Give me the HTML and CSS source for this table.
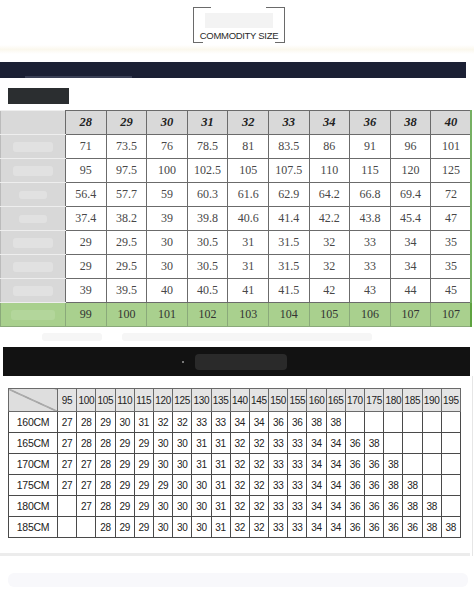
FILE: index.html
```html
<!DOCTYPE html>
<html>
<head>
<meta charset="utf-8">
<link rel="stylesheet" href="styles.css">
</head>
<body>
<div class="page">
  <div class="title-wrap">
    <div class="title">
      <span class="title-blur"></span>
      <span class="title-text">COMMODITY SIZE</span>
    </div>
  </div>
  <div class="cream"></div>
  <div class="navy"><span class="navy-stripe"></span></div>
  <div class="tag"></div>

  <table class="t1">
    <colgroup><col class="c1-first"><col span="10" class="c1"></colgroup>
    <tr class="head"><th class="side"></th><th>28</th><th>29</th><th>30</th><th>31</th><th>32</th><th>33</th><th>34</th><th>36</th><th>38</th><th>40</th></tr>
    <tr><td class="side"><span class="blob"></span></td><td>71</td><td>73.5</td><td>76</td><td>78.5</td><td>81</td><td>83.5</td><td>86</td><td>91</td><td>96</td><td>101</td></tr>
    <tr><td class="side"><span class="blob"></span></td><td>95</td><td>97.5</td><td>100</td><td>102.5</td><td>105</td><td>107.5</td><td>110</td><td>115</td><td>120</td><td>125</td></tr>
    <tr><td class="side"><span class="blob small"></span></td><td>56.4</td><td>57.7</td><td>59</td><td>60.3</td><td>61.6</td><td>62.9</td><td>64.2</td><td>66.8</td><td>69.4</td><td>72</td></tr>
    <tr><td class="side"><span class="blob small"></span></td><td>37.4</td><td>38.2</td><td>39</td><td>39.8</td><td>40.6</td><td>41.4</td><td>42.2</td><td>43.8</td><td>45.4</td><td>47</td></tr>
    <tr><td class="side"><span class="blob"></span></td><td>29</td><td>29.5</td><td>30</td><td>30.5</td><td>31</td><td>31.5</td><td>32</td><td>33</td><td>34</td><td>35</td></tr>
    <tr><td class="side"><span class="blob"></span></td><td>29</td><td>29.5</td><td>30</td><td>30.5</td><td>31</td><td>31.5</td><td>32</td><td>33</td><td>34</td><td>35</td></tr>
    <tr><td class="side"><span class="blob"></span></td><td>39</td><td>39.5</td><td>40</td><td>40.5</td><td>41</td><td>41.5</td><td>42</td><td>43</td><td>44</td><td>45</td></tr>
    <tr class="green"><td class="side-green"><span class="blob green-blob"></span></td><td>99</td><td>100</td><td>101</td><td>102</td><td>103</td><td>104</td><td>105</td><td>106</td><td>107</td><td>107</td></tr>
  </table>

  <div class="fade-row"><span class="fade a"></span><span class="fade b"></span></div>

  <div class="black-bar"><span class="dot"></span><span class="bar-blur"></span></div>

  <div class="lower">
    <table class="t2">
      <colgroup><col class="c2-first"><col span="21" class="c2"></colgroup>
      <tr class="head"><th class="diag"></th><th>95</th><th>100</th><th>105</th><th>110</th><th>115</th><th>120</th><th>125</th><th>130</th><th>135</th><th>140</th><th>145</th><th>150</th><th>155</th><th>160</th><th>165</th><th>170</th><th>175</th><th>180</th><th>185</th><th>190</th><th>195</th></tr>
      <tr><td class="h">160CM</td><td>27</td><td>28</td><td>29</td><td>30</td><td>31</td><td>32</td><td>32</td><td>33</td><td>33</td><td>34</td><td>34</td><td>36</td><td>36</td><td>38</td><td>38</td><td></td><td></td><td></td><td></td><td></td><td></td></tr>
      <tr><td class="h">165CM</td><td>27</td><td>28</td><td>28</td><td>29</td><td>29</td><td>30</td><td>30</td><td>31</td><td>31</td><td>32</td><td>32</td><td>33</td><td>33</td><td>34</td><td>34</td><td>36</td><td>38</td><td></td><td></td><td></td><td></td></tr>
      <tr><td class="h">170CM</td><td>27</td><td>27</td><td>28</td><td>29</td><td>29</td><td>30</td><td>30</td><td>31</td><td>31</td><td>32</td><td>32</td><td>33</td><td>33</td><td>34</td><td>34</td><td>36</td><td>36</td><td>38</td><td></td><td></td><td></td></tr>
      <tr><td class="h">175CM</td><td>27</td><td>27</td><td>28</td><td>29</td><td>29</td><td>29</td><td>30</td><td>30</td><td>31</td><td>32</td><td>32</td><td>33</td><td>33</td><td>34</td><td>34</td><td>36</td><td>36</td><td>38</td><td>38</td><td></td><td></td></tr>
      <tr><td class="h">180CM</td><td></td><td>27</td><td>28</td><td>29</td><td>29</td><td>30</td><td>30</td><td>30</td><td>31</td><td>32</td><td>32</td><td>33</td><td>33</td><td>34</td><td>34</td><td>36</td><td>36</td><td>36</td><td>38</td><td>38</td><td></td></tr>
      <tr><td class="h">185CM</td><td></td><td></td><td>28</td><td>29</td><td>29</td><td>30</td><td>30</td><td>30</td><td>31</td><td>32</td><td>32</td><td>33</td><td>33</td><td>34</td><td>34</td><td>36</td><td>36</td><td>36</td><td>36</td><td>38</td><td>38</td></tr>
    </table>
    <div class="bottom-line"></div>
  </div>
  <div class="bottom-blur"></div>
</div>
</body>
</html>
```

FILE: styles.css
```css
html, body {
  margin: 0;
  padding: 0;
  background: #ffffff;
}
.page {
  width: 474px;
  height: 600px;
  overflow: hidden;
  font-family: "Liberation Sans", Arial, sans-serif;
}
.title-wrap {
  display: flex;
  justify-content: flex-start;
  padding: 7px 0 0 193px;
  height: 43px;
  box-sizing: border-box;
}
.title {
  position: relative;
  width: 92px;
  height: 36px;
  box-sizing: border-box;
  border-left: 1px solid #6a6a6a;
  border-right: 1px solid #6a6a6a;
  display: flex;
  flex-direction: column;
  align-items: center;
  background:
    linear-gradient(#6a6a6a, #6a6a6a) left top / 17px 1px no-repeat,
    linear-gradient(#6a6a6a, #6a6a6a) left bottom / 9px 1px no-repeat,
    linear-gradient(#6a6a6a, #6a6a6a) right top / 18px 1px no-repeat,
    linear-gradient(#6a6a6a, #6a6a6a) right bottom / 9px 1px no-repeat;
}
.title-blur {
  position: absolute;
  top: 6px;
  left: 11px;
  width: 68px;
  height: 15px;
  background: #f3f3f3;
}
.title-text {
  margin-top: 24px;
  font-size: 9.5px;
  letter-spacing: -0.3px;
  color: #2a2a2a;
  line-height: 10px;
  white-space: nowrap;
}
.cream {
  height: 9px;
  margin-top: 2px;
  background: linear-gradient(#ffffff, #fbf8ee 50%, #ffffff);
}
.navy {
  margin-top: 8px;
  width: 466px;
  height: 16px;
  background: #1b2034;
  display: flex;
  align-items: flex-end;
}
.navy-stripe {
  margin-left: 25px;
  width: 107px;
  height: 2px;
  background: #3b4156;
}
.tag {
  margin: 10px 0 0 8px;
  width: 61px;
  height: 16px;
  background: #2b2e30;
}
.t1 {
  margin-top: 6px;
  border-collapse: collapse;
  table-layout: fixed;
  width: 471px;
  font-family: "Liberation Serif", "Times New Roman", serif;
  color: #474747;
}
.c1-first { width: 65px; }
.c1 { width: 40.6px; }
.t1 td, .t1 th {
  border: 1px solid #6b6b6b;
  height: 23px;
  padding: 0;
  text-align: center;
  font-size: 12px;
  font-weight: normal;
}
.t1 .head th {
  background: #d9d9d9;
  font-weight: bold;
  font-style: italic;
  font-size: 12.5px;
  color: #222;
}
.t1 .side {
  background: #d8d8d8;
  border-top-color: #eeeeee;
  border-bottom-color: #eeeeee;
  border-left-color: #bbbbbb;
}
.t1 .head .side { background: #d9d9d9; }
.blob {
  display: inline-block;
  width: 40px;
  height: 10px;
  background: #e1e1e1;
  border-radius: 3px;
  vertical-align: middle;
}
.blob.small { width: 28px; height: 8px; }
.t1 tr.green td {
  background: #a9d08e;
  color: #333;
  border-color: #8aa97a;
}
.t1 tr.green td:last-child { border-right: 2px solid #5fa340; }
.t1 td:last-child, .t1 th:last-child { border-right: 2px solid #76b062; }
.t1 .side-green { background: #a9d08e; }
.green-blob { background: #b3d69b; width: 44px; }
.fade-row {
  height: 20px;
  display: flex;
  align-items: center;
  gap: 20px;
  padding-left: 42px;
}
.fade { height: 8px; background: #f6f6f6; border-radius: 3px; }
.fade.a { width: 60px; }
.fade.b { width: 250px; }
.black-bar {
  margin-left: 3px;
  width: 467px;
  height: 29px;
  background: #121212;
  display: flex;
  align-items: center;
}
.dot {
  margin-left: 179px;
  width: 2px;
  height: 2px;
  background: #777;
}
.bar-blur {
  margin-left: 11px;
  width: 92px;
  height: 16px;
  background: #2a2a2a;
  border-radius: 4px;
}
.lower {
  width: 472px;
  border-right: 1px solid #e6e6e6;
  padding-top: 12px;
}
.t2 {
  margin: 0 0 0 8px;
  border-collapse: collapse;
  table-layout: fixed;
  width: 452px;
  font-family: "Liberation Sans", Arial, sans-serif;
  color: #222;
}
.c2-first { width: 49px; }
.c2 { width: 19.2px; }
.t2 td, .t2 th {
  border: 1px solid #4a4a4a;
  height: 20px;
  padding: 0;
  text-align: center;
  font-size: 10px;
  letter-spacing: -0.3px;
  font-weight: normal;
  white-space: nowrap;
  overflow: hidden;
}
.t2 .head th {
  height: 22px;
  background: #e4e4e4;
  border-color: #6a6a6a;
}
.t2 .head th.diag {
  background-image: linear-gradient(to top right, transparent calc(50% - 0.7px), #555 50%, transparent calc(50% + 0.7px));
  background-color: #dedede;
}
.t2 td.h { font-size: 10.5px; }
.bottom-line {
  margin-top: 15px;
  width: 470px;
  height: 3px;
  background: #ececec;
}
.bottom-blur {
  margin: 17px 0 0 8px;
  width: 460px;
  height: 14px;
  background: #f8f8fb;
  border-radius: 6px;
}
```
